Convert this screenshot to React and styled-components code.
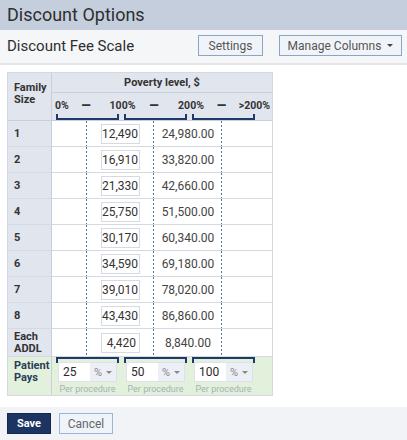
import React from "react";
import styled, { createGlobalStyle, css } from "styled-components";

const GlobalStyle = createGlobalStyle`
  html, body { margin: 0; padding: 0; background: #fff; }
  body { font-family: Roboto, "Liberation Sans", Arial, sans-serif; color: #333; }
  * { box-sizing: border-box; }
`;

const Page = styled.div`
  width: 407px;
  height: 440px;
  display: flex;
  flex-direction: column;
  overflow: hidden;
`;

const TitleBar = styled.div`
  height: 30px;
  background: #c5cedd;
  padding-left: 7px;
  font-size: 18px;
  line-height: 30px;
  color: #2e2e2e;
`;

const SubBar = styled.div`
  height: 35px;
  background: #f5f6f8;
  border-bottom: 2px solid #e4e6ea;
  display: flex;
  align-items: center;
  padding: 0 5px 2px 7px;
`;

const SubTitle = styled.div`
  font-size: 15px;
  color: #2e2e2e;
  flex: 1;
`;

const ToolButton = styled.button`
  height: 21px;
  width: ${(p) => p.$w}px;
  margin-left: ${(p) => p.$ml || 0}px;
  border: 1px solid #8ba6c4;
  background: #f0f4f9;
  color: #555;
  font-family: inherit;
  font-size: 12px;
  padding: 0;
  display: flex;
  align-items: center;
  justify-content: center;
  gap: 6px;
`;

const Caret = styled.span`
  width: 0;
  height: 0;
  border-left: ${(p) => p.$s || 4}px solid transparent;
  border-right: ${(p) => p.$s || 4}px solid transparent;
  border-top: ${(p) => p.$s || 4}px solid ${(p) => p.$c || "#444"};
  display: inline-block;
`;

const Content = styled.div`
  flex: 1;
  padding: 7px 7px 0;
`;

const Table = styled.div`
  width: 266px;
  border: 1px solid #d3d8e1;
  display: grid;
  grid-template-columns: 44px 220px;
`;

const FamilyCell = styled.div`
  border-right: 1px solid #c9cfd9;
  border-bottom: 1px solid ${(p) => (p.$last ? "transparent" : "#d5dae2")};
  background: ${(p) => (p.$green ? "#e2f0dc" : "#e1e5ed")};
  font-size: 11px;
  font-weight: 700;
  line-height: 12px;
  color: ${(p) => (p.$green ? "#2b3c5a" : "#333")};
  padding: ${(p) => p.$pad || "0 0 0 6px"};
  height: ${(p) => (p.$h ? `${p.$h}px` : "auto")};
  display: flex;
  align-items: ${(p) => (p.$top ? "flex-start" : "center")};
  ${(p) => p.$span && css`grid-row: span ${p.$span};`}
  ${(p) => p.$header && css`border-bottom-color: #c9cfd9;`}
`;

const HeadTop = styled.div`
  height: 20px;
  background: #e1e5ed;
  border-bottom: 1px solid #c9cfd9;
  font-size: 11px;
  font-weight: 700;
  text-align: center;
  line-height: 19px;
  color: #333;
`;

const HeadSub = styled.div`
  height: 28px;
  background: #e1e5ed;
  border-bottom: 1px solid #c9cfd9;
  display: flex;
  flex-direction: column;
  justify-content: space-between;
  padding-top: 7px;
`;

const LabelGrid = styled.div`
  display: grid;
  grid-template-columns: 17px 34px 39px 24px 50px 11px 45px;
  font-size: 10.5px;
  font-weight: 700;
  line-height: 12px;
  color: #333;
`;

const Label = styled.span`
  text-align: ${(p) => p.$align || "center"};
  white-space: nowrap;
  padding: ${(p) => p.$pad || 0};
  ${(p) => p.$dash && css`font-size: 12px; font-weight: 900; line-height: 12px;`}
`;

const BracketRow = styled.div`
  display: flex;
  gap: 5px;
  padding-left: 4px;
`;

const Bracket = styled.div`
  width: 63px;
  height: 6px;
  border: 2px solid #1f3a68;
  ${(p) => (p.$down ? css`border-bottom: none;` : css`border-top: none;`)}
`;

const DataRow = styled.div`
  height: ${(p) => p.$h || 26}px;
  border-bottom: 1px solid #d5dae2;
  display: grid;
  grid-template-columns: 35px 67px 68px 50px;
  background: #fff;
`;

const Col = styled.div`
  display: flex;
  align-items: center;
  justify-content: center;
  font-size: 12px;
  color: #444;
  ${(p) =>
    p.$dashed &&
    css`
      background-image: linear-gradient(#5573aa 50%, transparent 50%);
      background-size: 1px 4px;
      background-repeat: repeat-y;
      background-position: right top;
    `}
`;

const ValueBox = styled.div`
  width: 39px;
  height: 20px;
  border: 1px solid #d6dbe3;
  background: #fff;
  font-size: 12px;
  color: #333;
  text-align: right;
  line-height: 18px;
  padding-right: 3px;
`;

const PayRow = styled.div`
  height: 38px;
  background: #e2f0dc;
  display: flex;
  gap: 5px;
  padding-left: 4px;
`;

const PayGroup = styled.div`
  width: 63px;
  display: flex;
  flex-direction: column;
  align-items: center;
`;

const InputGroup = styled.div`
  display: flex;
  width: 59px;
  height: 20px;
  margin-top: -1px;
  border: 1px solid #dde2ea;
  background: #fff;
`;

const PayInput = styled.div`
  width: 31px;
  font-size: 12px;
  line-height: 18px;
  color: #2a2a2a;
  padding-left: 4px;
`;

const Unit = styled.div`
  flex: 1;
  background: #eceff6;
  display: flex;
  align-items: center;
  justify-content: center;
  gap: 4px;
  font-size: 11px;
  color: #888;
`;

const Caption = styled.div`
  font-size: 9px;
  color: #a9b0ba;
  line-height: 12px;
  margin-top: 1px;
  white-space: nowrap;
`;

const Footer = styled.div`
  height: 33px;
  background: #f2f3f6;
  display: flex;
  align-items: center;
  padding: 0 7px;
  gap: 8px;
`;

const SaveButton = styled.button`
  width: 44px;
  height: 21px;
  background: #1c3461;
  border: 1px solid #13284e;
  color: #fff;
  font-family: inherit;
  font-weight: 700;
  font-size: 11px;
  padding: 0;
`;

const CancelButton = styled.button`
  width: 54px;
  height: 21px;
  background: #eff4fa;
  border: 1px solid #9ab6d6;
  color: #666;
  font-family: inherit;
  font-size: 12px;
  padding: 0;
`;

const rows = [
  ["1", "12,490", "24,980.00"],
  ["2", "16,910", "33,820.00"],
  ["3", "21,330", "42,660.00"],
  ["4", "25,750", "51,500.00"],
  ["5", "30,170", "60,340.00"],
  ["6", "34,590", "69,180.00"],
  ["7", "39,010", "78,020.00"],
  ["8", "43,430", "86,860.00"],
];

const pays = ["25", "50", "100"];

export default function App() {
  return (
    <Page>
      <GlobalStyle />
      <TitleBar>Discount Options</TitleBar>
      <SubBar>
        <SubTitle>Discount Fee Scale</SubTitle>
        <ToolButton $w={65}>Settings</ToolButton>
        <ToolButton $w={123} $ml={16}>
          Manage Columns <Caret $s={3.5} />
        </ToolButton>
      </SubBar>
      <Content>
        <Table>
          <FamilyCell $span={2} $top $header $pad="9px 0 0 6px">
            Family
            <br />
            Size
          </FamilyCell>
          <HeadTop>Poverty level, $</HeadTop>
          <HeadSub>
            <LabelGrid>
              <Label $align="left" $pad="0 0 0 3px">0%</Label>
              <Label $dash>—</Label>
              <Label>100%</Label>
              <Label $dash>—</Label>
              <Label>200%</Label>
              <Label $dash>—</Label>
              <Label $align="right" $pad="0 2px 0 0">&gt;200%</Label>
            </LabelGrid>
            <BracketRow>
              <Bracket />
              <Bracket />
              <Bracket />
            </BracketRow>
          </HeadSub>
          {rows.map(([n, a, b]) => (
            <React.Fragment key={n}>
              <FamilyCell $h={26}>{n}</FamilyCell>
              <DataRow>
                <Col $dashed />
                <Col $dashed>
                  <ValueBox>{a}</ValueBox>
                </Col>
                <Col $dashed>{b}</Col>
                <Col />
              </DataRow>
            </React.Fragment>
          ))}
          <FamilyCell $h={28}>
            Each
            <br />
            ADDL
          </FamilyCell>
          <DataRow $h={28}>
            <Col $dashed />
            <Col $dashed>
              <ValueBox>4,420</ValueBox>
            </Col>
            <Col $dashed>8,840.00</Col>
            <Col />
          </DataRow>
          <FamilyCell $green $last $top $pad="3px 0 0 6px">
            Patient
            <br />
            Pays
          </FamilyCell>
          <PayRow>
            {pays.map((v) => (
              <PayGroup key={v}>
                <Bracket $down />
                <InputGroup>
                  <PayInput>{v}</PayInput>
                  <Unit>
                    % <Caret $s={3} $c="#888" />
                  </Unit>
                </InputGroup>
                <Caption>Per procedure</Caption>
              </PayGroup>
            ))}
          </PayRow>
        </Table>
      </Content>
      <Footer>
        <SaveButton>Save</SaveButton>
        <CancelButton>Cancel</CancelButton>
      </Footer>
    </Page>
  );
}
